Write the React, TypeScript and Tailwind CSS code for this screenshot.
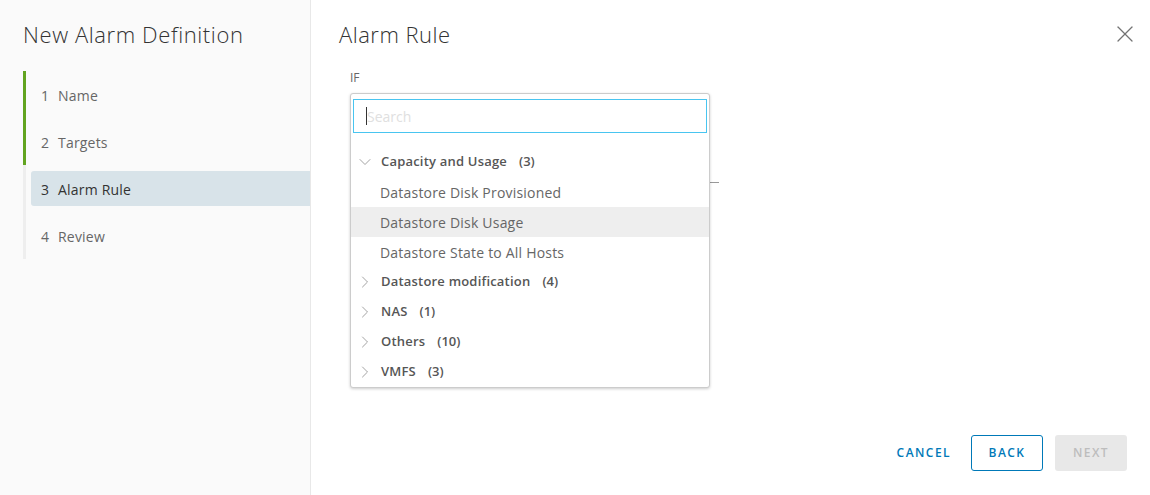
import { ChevronDown, ChevronRight, X } from "lucide-react"

const steps = [
  { n: 1, label: "Name", done: true },
  { n: 2, label: "Targets", done: true },
  { n: 3, label: "Alarm Rule", active: true },
  { n: 4, label: "Review" },
]

const groups = [
  { name: "Datastore modification", count: 4 },
  { name: "NAS", count: 1 },
  { name: "Others", count: 10 },
  { name: "VMFS", count: 3 },
]

export default function App() {
  return (
    <div className="flex h-[495px] w-[1150px] bg-white font-['Open_Sans',sans-serif] text-[#565656]">
      {/* Sidebar */}
      <div className="flex w-[311px] shrink-0 flex-col border-r border-[#e8e8e8] bg-[#fafafa]">
        <h1 className="ml-[23px] mt-[20px] text-[22px] font-light leading-[28px] tracking-[0.6px] text-[#333]">
          New Alarm Definition
        </h1>
        <div className="ml-[23px] mt-[23px] flex flex-col">
          {steps.map((s) => (
            <div key={s.n} className="flex">
              <div className={`w-[3px] ${s.done ? "bg-[#62a420]" : "bg-[#eeeeee]"}`} />
              <div className="flex-1 py-[6px] pl-[5px]">
                <div
                  className={`flex h-[35px] items-center rounded-l-[3px] pl-[10px] pt-[2px] text-[14px] tracking-[0.2px] ${
                    s.active ? "bg-[#d8e3e9] text-[#333]" : "text-[#666]"
                  }`}
                >
                  <span className="w-[17px]">{s.n}</span>
                  <span>{s.label}</span>
                </div>
              </div>
            </div>
          ))}
        </div>
      </div>

      {/* Main */}
      <div className="relative flex flex-1 flex-col">
        <div className="flex items-start justify-between pl-[28px] pr-[11px] pt-[20px]">
          <h2 className="text-[22px] font-light leading-[28px] tracking-[0.5px] text-[#333]">Alarm Rule</h2>
          <X className="h-[28px] w-[28px] text-[#737373]" strokeWidth={1.1} />
        </div>
        <div className="ml-[39px] mt-[22px] text-[12px] leading-[16px] text-[#666]">IF</div>

        <div className="relative ml-[39px] mt-[7px] w-[369px]">
          {/* underlying select line */}
          <div className="absolute left-[359px] top-[89px] h-px w-[10px] bg-[#999]" />
          <div className="relative z-10 w-[360px] rounded-[3px] border border-[#cccccc] bg-white pt-[5px] shadow-[0_1px_3px_rgba(0,0,0,0.2)]">
            <div className="mx-[2px] flex h-[34px] items-center border border-[#49c5f0] px-[12px]">
              <span className="h-[18px] w-px bg-[#333]" />
              <span className="text-[14px] text-[#e0e0e0]">Search</span>
            </div>
            <div className="mt-[14px] flex h-[30px] items-center pl-[4px]">
              <ChevronDown className="h-[20px] w-[20px] text-[#999]" strokeWidth={1.1} />
              <span className="ml-[6px] text-[13px] font-semibold tracking-[0.2px] text-[#565656]">
                Capacity and Usage
              </span>
              <span className="ml-[12px] text-[13px] font-semibold text-[#565656]">(3)</span>
            </div>
            {["Datastore Disk Provisioned", "Datastore Disk Usage", "Datastore State to All Hosts"].map((t, i) => (
              <div
                key={t}
                className={`flex h-[30px] items-center pl-[29px] text-[14px] tracking-[0.2px] text-[#666] ${
                  i === 1 ? "bg-[#eeeeee]" : ""
                }`}
              >
                {t}
              </div>
            ))}
            {groups.map((g) => (
              <div key={g.name} className="flex h-[30px] items-center pl-[4px]">
                <ChevronRight className="h-[20px] w-[20px] text-[#999]" strokeWidth={1.1} />
                <span className="ml-[6px] text-[13px] font-semibold tracking-[0.2px] text-[#565656]">{g.name}</span>
                <span className="ml-[12px] text-[13px] font-semibold text-[#565656]">({g.count})</span>
              </div>
            ))}
          </div>
        </div>

        <div className="mt-auto mb-[24px] mr-[23px] flex items-center justify-end gap-[12px]">
          <button className="h-[36px] px-[8px] text-[12px] font-semibold tracking-[0.12em] text-[#0079b8]">
            CANCEL
          </button>
          <button className="h-[36px] w-[72px] rounded-[3px] border border-[#0079b8] text-[12px] font-semibold tracking-[0.12em] text-[#0079b8]">
            BACK
          </button>
          <button className="h-[36px] w-[72px] rounded-[3px] bg-[#e8e8e8] text-[12px] font-semibold tracking-[0.12em] text-[#bdbdbd]">
            NEXT
          </button>
        </div>
      </div>
    </div>
  )
}
